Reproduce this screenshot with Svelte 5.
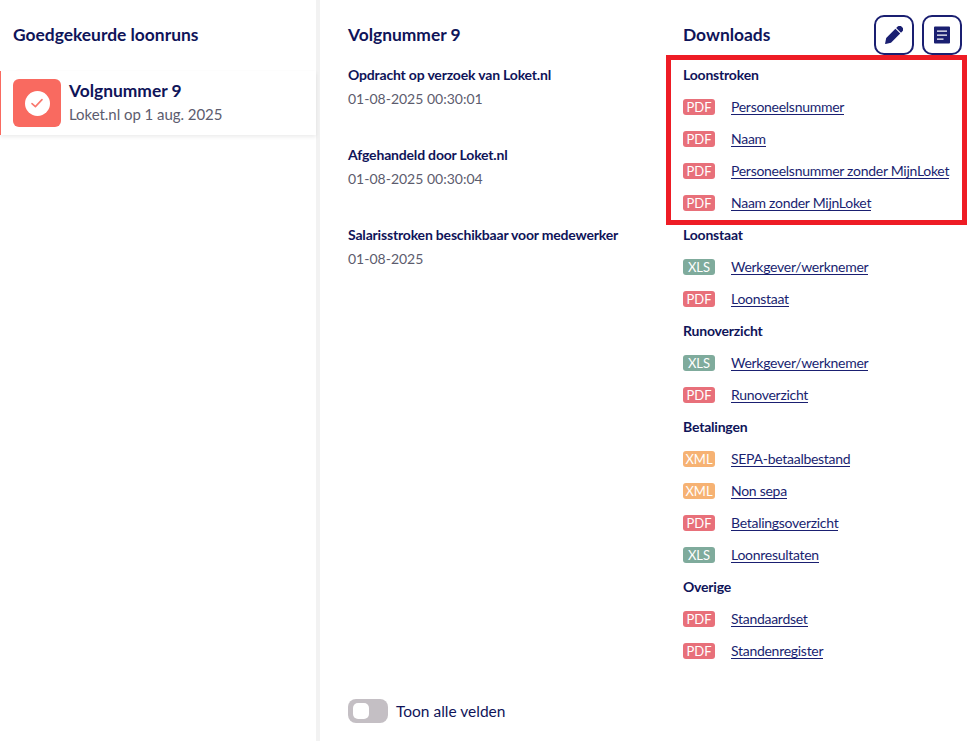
<script>
	const steps = [
		{ title: 'Opdracht op verzoek van Loket.nl', date: '01-08-2025 00:30:01' },
		{ title: 'Afgehandeld door Loket.nl', date: '01-08-2025 00:30:04' },
		{ title: 'Salarisstroken beschikbaar voor medewerker', date: '01-08-2025' }
	];

	const groups = [
		{
			name: 'Loonstroken',
			files: [
				{ type: 'PDF', label: 'Personeelsnummer' },
				{ type: 'PDF', label: 'Naam' },
				{ type: 'PDF', label: 'Personeelsnummer zonder MijnLoket' },
				{ type: 'PDF', label: 'Naam zonder MijnLoket' }
			]
		},
		{
			name: 'Loonstaat',
			files: [
				{ type: 'XLS', label: 'Werkgever/werknemer' },
				{ type: 'PDF', label: 'Loonstaat' }
			]
		},
		{
			name: 'Runoverzicht',
			files: [
				{ type: 'XLS', label: 'Werkgever/werknemer' },
				{ type: 'PDF', label: 'Runoverzicht' }
			]
		},
		{
			name: 'Betalingen',
			files: [
				{ type: 'XML', label: 'SEPA-betaalbestand' },
				{ type: 'XML', label: 'Non sepa' },
				{ type: 'PDF', label: 'Betalingsoverzicht' },
				{ type: 'XLS', label: 'Loonresultaten' }
			]
		},
		{
			name: 'Overige',
			files: [
				{ type: 'PDF', label: 'Standaardset' },
				{ type: 'PDF', label: 'Standenregister' }
			]
		}
	];
</script>

<div class="page">
	<aside class="sidebar">
		<h2>Goedgekeurde loonruns</h2>
		<div class="run">
			<div class="run-icon">
				<span class="check">
					<svg width="14" height="14" viewBox="0 0 14 14" fill="none">
						<path d="M2 7.6 L5.4 10.6 L12 3.6" stroke="#f9776d" stroke-width="1.6" stroke-linecap="round" stroke-linejoin="round" />
					</svg>
				</span>
			</div>
			<div>
				<div class="run-title">Volgnummer 9</div>
				<div class="run-sub">Loket.nl op 1 aug. 2025</div>
			</div>
		</div>
	</aside>

	<main class="content">
		<section class="details">
			<h2>Volgnummer 9</h2>
			{#each steps as step}
				<div class="step">
					<div class="step-title">{step.title}</div>
					<div class="step-date">{step.date}</div>
				</div>
			{/each}
			<div class="toggle-row">
				<span class="toggle"><span class="knob"></span></span>
				<span class="toggle-label">Toon alle velden</span>
			</div>
		</section>

		<section class="downloads">
			<div class="downloads-head">
				<h2>Downloads</h2>
				<div class="actions">
					<button aria-label="Bewerken">
						<svg width="18" height="18" viewBox="0 0 18 18">
							<path d="M10.4 2.8 L15.2 7.6 L6 16.8 L0.6 17.9 A0.4 0.4 0 0 1 0.1 17.4 L1.2 12 Z M11.2 2 L12.4 0.8 A3.4 3.4 0 0 1 17.2 5.6 L16 6.8 Z" fill="#1a1f71" />
						</svg>
					</button>
					<button aria-label="Document">
						<svg width="16" height="18" viewBox="0 0 16 18">
							<path fill-rule="evenodd" d="M1 0.5 h14 a1 1 0 0 1 1 1 v15 a1 1 0 0 1 -1 1 h-14 a1 1 0 0 1 -1 -1 v-15 a1 1 0 0 1 1 -1 z M3 4.4 v1.4 h10 v-1.4 z M3 8.4 v1.4 h10 v-1.4 z M3 12.4 v1.4 h6.5 v-1.4 z" fill="#1a1f71" />
						</svg>
					</button>
				</div>
			</div>
			{#each groups as group}
				<h3>{group.name}</h3>
				{#each group.files as file}
					<div class="file">
						<span class="badge {file.type.toLowerCase()}">{file.type}</span>
						<a href="#top">{file.label}</a>
					</div>
				{/each}
			{/each}
		</section>
	</main>

	<div class="highlight"></div>
</div>

<style>
	:global(body) {
		margin: 0;
		background: #fff;
	}

	.page {
		position: relative;
		display: flex;
		width: 973px;
		height: 741px;
		overflow: hidden;
		font-family: 'Lato', 'Noto Sans', sans-serif;
		font-size: 14px;
		color: #0f1459;
	}

	h2 {
		margin: 0;
		font-size: 17.4px;
		line-height: 24px;
		font-weight: 700;
	}

	.sidebar {
		width: 316px;
		flex: none;
		border-right: 4px solid #f2f2f2;
		padding-top: 23px;
	}

	.sidebar h2 {
		padding-left: 13px;
	}

	.run {
		display: flex;
		align-items: center;
		gap: 8px;
		height: 64px;
		margin-top: 24px;
		padding-left: 12px;
		border-left: 1px solid #f96a60;
		box-shadow: 0 2px 4px rgba(0, 0, 0, 0.08);
	}

	.run-icon {
		display: flex;
		align-items: center;
		justify-content: center;
		width: 48px;
		height: 48px;
		border-radius: 6px;
		background: #f96a60;
	}

	.check {
		display: flex;
		align-items: center;
		justify-content: center;
		width: 25px;
		height: 25px;
		border-radius: 50%;
		background: #fff;
	}

	.run-title {
		font-size: 17.4px;
		line-height: 24px;
		font-weight: 700;
		margin-top: -2px;
	}

	.run-sub {
		font-size: 15px;
		line-height: 22px;
		letter-spacing: -0.05px;
		color: #5c5c6e;
	}

	.content {
		display: flex;
		flex: 1;
	}

	.details {
		position: relative;
		width: 335px;
		flex: none;
		box-sizing: border-box;
		padding: 23px 0 0 28px;
	}

	.step {
		height: 80px;
	}

	.step:first-of-type {
		margin-top: 19px;
	}

	.step-title {
		font-size: 14px;
		line-height: 18px;
		font-weight: 700;
		letter-spacing: -0.18px;
	}

	.step-date {
		margin-top: 5px;
		font-size: 14px;
		line-height: 20px;
		color: #5c5c6e;
	}

	.toggle-row {
		position: absolute;
		left: 28px;
		top: 699px;
		display: flex;
		align-items: center;
		gap: 8px;
	}

	.toggle {
		display: flex;
		align-items: center;
		width: 40px;
		height: 24px;
		border-radius: 8px;
		background: #c4bfc4;
	}

	.knob {
		width: 16px;
		height: 16px;
		margin-left: 5px;
		border-radius: 5px;
		background: #fff;
	}

	.toggle-label {
		font-size: 15.5px;
		line-height: 22px;
		margin-top: -1px;
	}

	.downloads {
		flex: 1;
		padding-left: 28px;
	}

	.downloads-head {
		display: flex;
		align-items: center;
		justify-content: space-between;
		height: 59px;
		padding: 15px 11px 4px 0;
		box-sizing: border-box;
	}

	.actions {
		display: flex;
		gap: 8px;
	}

	button {
		display: flex;
		align-items: center;
		justify-content: center;
		width: 40px;
		height: 40px;
		padding: 0;
		border: 2px solid #1a1f71;
		border-radius: 10px;
		background: #fff;
	}

	h3 {
		margin: 0;
		height: 32px;
		font-size: 14px;
		line-height: 32px;
		font-weight: 700;
		letter-spacing: -0.2px;
	}

	.file {
		display: flex;
		align-items: center;
		gap: 16px;
		height: 32px;
	}

	.badge {
		width: 32px;
		height: 16px;
		flex: none;
		border-radius: 3px;
		text-align: center;
		font-size: 13px;
		line-height: 16px;
		color: #fff;
	}

	.pdf {
		background: #e8707a;
	}

	.xls {
		background: #7fab9c;
	}

	.xml {
		background: #f6b273;
	}

	a {
		color: #1a1f71;
		font-size: 14px;
		line-height: 15px;
		letter-spacing: -0.28px;
		text-decoration: none;
		border-bottom: 1px solid #1a1f71;
	}

	.highlight {
		position: absolute;
		left: 666px;
		top: 55px;
		width: 301px;
		height: 170px;
		box-sizing: border-box;
		border: 5px solid #ee1c25;
		pointer-events: none;
	}
</style>
